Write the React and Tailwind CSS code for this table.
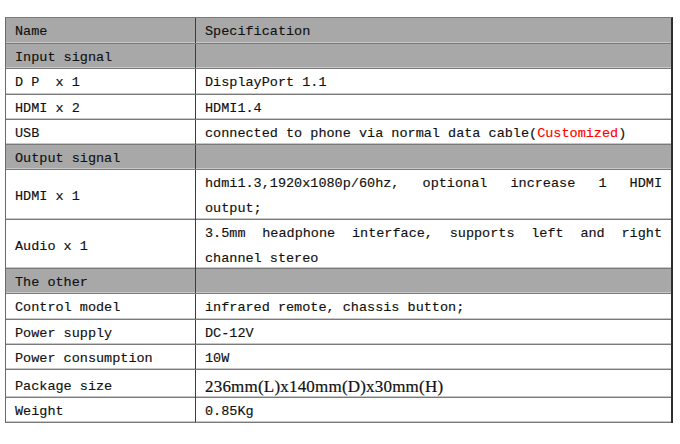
import React from 'react'

const mono = "font-['Liberation_Mono','DejaVu_Sans_Mono',monospace]"

const rows = [
  { name: 'Name', spec: 'Specification', head: true, h: 'h-[26px]' },
  { name: 'Input signal', spec: '', head: true, h: 'h-[25px]' },
  { name: 'D P  x 1', spec: 'DisplayPort 1.1', h: 'h-[26px]' },
  { name: 'HDMI x 2', spec: 'HDMI1.4', h: 'h-[25px]' },
  {
    name: 'USB',
    spec: (
      <>
        connected to phone via normal data cable(
        <span className="text-[#ff0000] [-webkit-text-stroke:0.15px_#ff0000]">Customized</span>)
      </>
    ),
    h: 'h-[25px]',
  },
  { name: 'Output signal', spec: '', head: true, h: 'h-[25px]' },
  {
    name: 'HDMI x 1',
    lines: ['hdmi1.3,1920x1080p/60hz, optional increase 1 HDMI', 'output;'],
    h: 'h-[50px]',
  },
  {
    name: 'Audio x 1',
    lines: ['3.5mm headphone interface, supports left and right', 'channel stereo'],
    h: 'h-[49px]',
  },
  { name: 'The other', spec: '', head: true, h: 'h-[25px]' },
  { name: 'Control model', spec: 'infrared remote, chassis button;', h: 'h-[26px]' },
  { name: 'Power supply', spec: 'DC-12V', h: 'h-[25px]' },
  { name: 'Power consumption', spec: '10W', h: 'h-[25px]' },
  {
    name: 'Package size',
    spec: (
      <span className="font-['Liberation_Serif',serif] text-[17px] tracking-[0.2px] [-webkit-text-stroke:0.2px_#111]">
        236mm(L)x140mm(D)x30mm(H)
      </span>
    ),
    h: 'h-[28px]',
  },
  { name: 'Weight', spec: '0.85Kg', h: 'h-[25px]' },
]

function Row({ row }) {
  const bg = row.head ? 'bg-[#a8a8a8]' : 'bg-white'
  return (
    <div
      className={`grid grid-cols-[190px_1fr] ${row.h} border-b border-b-[#7a7a7a] shadow-[inset_0_-1px_0_#c8c8c8] ${bg}`}
    >
      <div className="flex items-center border-r border-r-[#3c3c3c] pl-[9px] pt-[4px] whitespace-pre">
        {row.name}
      </div>
      {row.lines ? (
        <div className="flex flex-col pl-[9px] pr-[9px] pt-[1px] leading-[25px]">
          <div className="text-justify [text-align-last:justify]">{row.lines[0]}</div>
          <div>{row.lines[1]}</div>
        </div>
      ) : (
        <div className="flex items-center pl-[9px] pt-[4px] whitespace-pre">{row.spec}</div>
      )}
    </div>
  )
}

export default function App() {
  return (
    <div
      className={`min-h-[444px] w-[680px] bg-white pt-[17px] pl-[5px] ${mono} text-[13.5px] text-[#111] [-webkit-text-stroke:0.15px_#111]`}
    >
      <div className="w-[668px] border-t border-l border-t-[#7a7a7a] border-l-[#6a6a6a] border-r-2 border-r-[#2e2e2e]">
        {rows.map((r, i) => (
          <Row key={i} row={r} />
        ))}
      </div>
    </div>
  )
}
